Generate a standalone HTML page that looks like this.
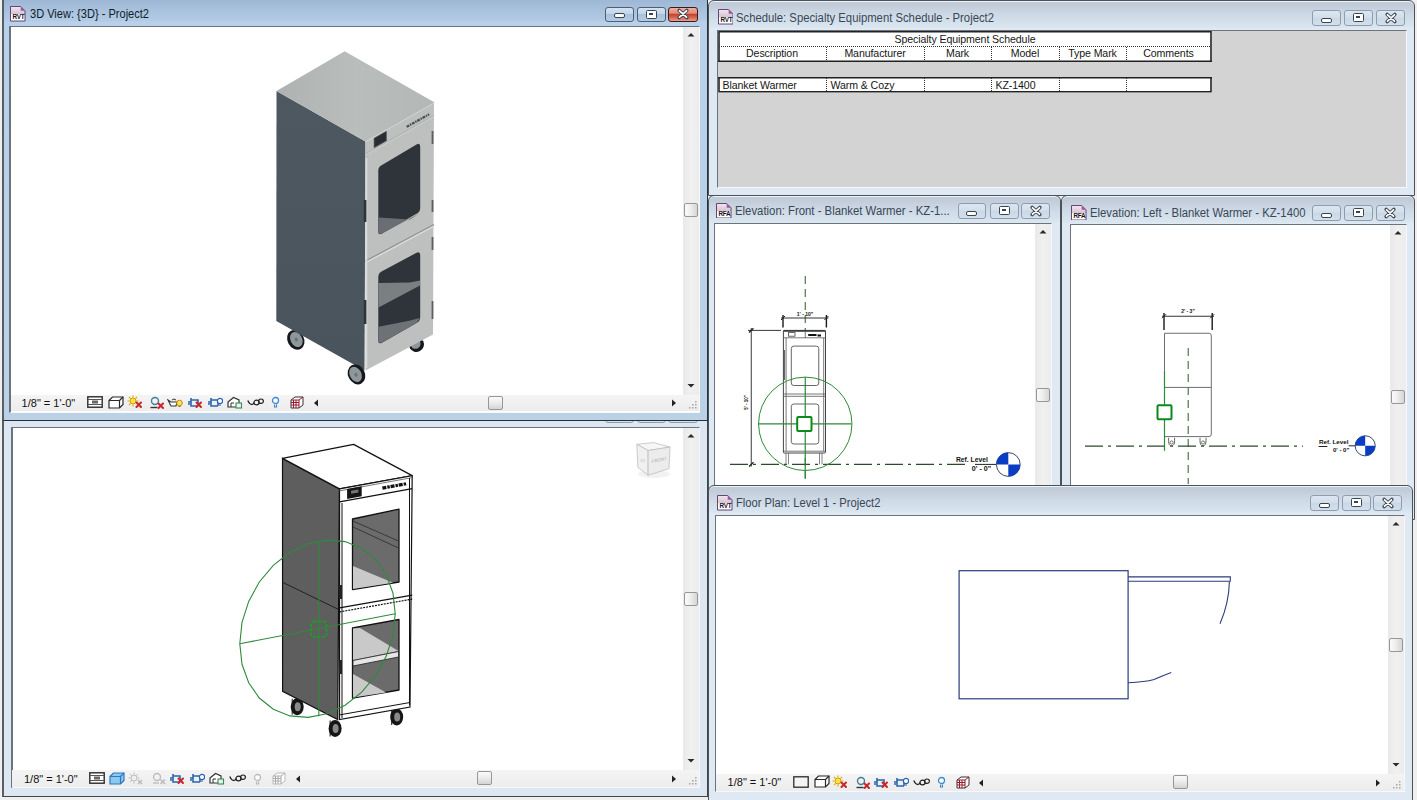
<!DOCTYPE html><html><head><meta charset="utf-8"><style>
*{box-sizing:border-box;margin:0;padding:0}
html,body{width:1417px;height:800px;overflow:hidden;background:#f1efed;font-family:"Liberation Sans",sans-serif;position:relative}
div,svg{position:absolute}
.win{border:1px solid #4a525a;border-radius:6px 6px 0 0;overflow:hidden;box-shadow:inset 0 1px 0 #eef3f8;background:linear-gradient(#c1cbd7 2px,#c3cdd9 5px,#cbd7e3 12px,#d3dfea 20px,#d9e5ef 26px,#e2eaf2 28px,#dfe9f4 29px)}
.act{border-color:#26303a;background:linear-gradient(#97b2d1,#a7c0dc 14px,#b3cbe5 26px,#b8d0e9 27px,#bbd1e6)}
.client{background:#fff;border:1px solid #6b747c;border-right-color:#f6f8fa;border-bottom-color:#f6f8fa;overflow:hidden}
.stat{background:#efefef;font-size:11px;color:#111;white-space:nowrap}
.tb{font-size:10.6px;letter-spacing:-0.1px;color:#161616;white-space:nowrap;line-height:11px}
</style></head><body>
<div class="win" style="left:2px;top:398px;width:706px;height:399px;border-color:#3c444c;border-left:2px solid #56606a;border-radius:0;background:#dce7f2"></div>
<div class="client" style="left:11px;top:427px;width:689px;height:361px;background:#fff;border-left:2px solid #6a747c"></div>
<div style="left:605px;top:415px;width:29px;height:8px;border:1px solid #8c9db1;border-radius:3px;background:#d6e1ec"></div>
<div style="left:637px;top:415px;width:29px;height:8px;border:1px solid #8c9db1;border-radius:3px;background:#d6e1ec"></div>
<div style="left:668px;top:415px;width:30px;height:8px;border:1px solid #8c9db1;border-radius:3px;background:#d6e1ec"></div>
<svg style="position:absolute;left:0;top:0" width="700" height="790" viewBox="0 0 700 790"><ellipse cx="297.2" cy="706.7" rx="6.5" ry="8.5" fill="#151515"/><ellipse cx="297.7" cy="706.7" rx="3" ry="4.5" fill="#8a8a8a"/><path d="M292.2 698.7v4M292.2 714.7v-4" stroke="#151515"/><ellipse cx="396.7" cy="717" rx="6.5" ry="8.5" fill="#151515"/><ellipse cx="397.2" cy="717" rx="3" ry="4.5" fill="#8a8a8a"/><path d="M391.7 709v4M391.7 725v-4" stroke="#151515"/><ellipse cx="335.1" cy="728.5" rx="6.5" ry="8.5" fill="#151515"/><ellipse cx="335.6" cy="728.5" rx="3" ry="4.5" fill="#8a8a8a"/><path d="M330.1 720.5v4M330.1 736.5v-4" stroke="#151515"/><polygon points="282.5,458.4 339.5,488.9 337.7,719.5 282.6,691.3" fill="#5e5e5e" stroke="#111" stroke-width="1.2"/><polyline points="282.6,582.3 338.0,609.2" fill="none" stroke="#222" stroke-width="1"/><polygon points="282.5,458.4 353.6,444.4 412.2,475.6 339.5,488.9" fill="#fff" stroke="#111" stroke-width="1.2" stroke-linejoin="round"/><polygon points="339.5,488.9 412.2,475.6 410.0,707.0 339.5,719.5" fill="#fff" stroke="#111" stroke-width="1.2"/><polyline points="339.5,501.9 412.2,488.6" fill="none" stroke="#111" stroke-width="1.2"/><polyline points="339.5,490.9 412.2,477.6" fill="none" stroke="#555" stroke-width="0.8"/><polygon points="347.1,489.0 361.7,486.3 361.7,496.3 347.1,499.0" fill="#151515"/><polygon points="351.1,490.8 358.4,489.4 358.4,492.4 351.1,493.8" fill="#777"/><polyline points="382.4,488.1 406.4,483.7" fill="none" stroke="#111" stroke-width="3.2" stroke-dasharray="4 1 2.5 0.8"/><polyline points="342.0,503.0 342.0,718.0" fill="none" stroke="#111" stroke-width="1"/><polyline points="409.5,478.0 409.5,705.0" fill="none" stroke="#111" stroke-width="1"/><rect x="339" y="585" width="3" height="14" fill="#222"/><rect x="339" y="660" width="3" height="14" fill="#222"/><polyline points="339.5,607.9 412.2,595.1" fill="none" stroke="#111" stroke-width="1.2"/><polyline points="339.5,611.9 412.2,599.1" fill="none" stroke="#111" stroke-width="1.2" stroke-dasharray="2 1"/><polyline points="339.5,714.9 410.0,702.5" fill="none" stroke="#111" stroke-width="1"/><polygon points="352.5,519.0 399.0,509.2 399.0,582.0 352.5,589.5" fill="#6b6b6b" stroke="#111" stroke-width="1.3" stroke-linejoin="round"/><polygon points="353.0,566.0 393.0,582.8 353.0,589.0" fill="#c9c9c9"/><polyline points="353.0,521.0 398.5,541.0" fill="none" stroke="#333" stroke-width="0.9"/><polyline points="353.0,527.0 398.5,548.0" fill="none" stroke="#333" stroke-width="0.9"/><polygon points="352.5,627.8 399.0,619.5 399.0,690.0 352.5,698.2" fill="#6b6b6b" stroke="#111" stroke-width="1.3" stroke-linejoin="round"/><polygon points="353.0,628.5 360.0,628.0 398.5,651.0 353.0,660.0" fill="#c9c9c9"/><polygon points="353.0,660.5 398.5,651.5 398.5,657.0 353.0,666.0" fill="#e6e6e6" stroke="#222" stroke-width="0.8"/><polygon points="353.0,674.0 386.0,692.5 353.0,697.5" fill="#c9c9c9"/><polygon points="395.2,613.8 393.0,593.2 386.3,574.8 375.7,559.5 361.7,548.2 345.1,541.6 326.9,540.1 308.1,543.7 289.9,552.3 273.3,565.3 259.3,582.0 248.7,601.4 242.0,622.4 239.8,643.8 242.0,664.3 248.7,682.7 259.3,698.0 273.3,709.3 289.9,715.9 308.1,717.4 326.9,713.8 345.1,705.2 361.7,692.2 375.7,675.5 386.3,656.1 393.0,635.1" fill="none" stroke="#2f8a3c" stroke-width="1.1"/><polyline points="239.8,643.8 395.2,613.8" fill="none" stroke="#2f8a3c" stroke-width="1.1"/><polyline points="318.8,541.2 318.8,716.2" fill="none" stroke="#2f8a3c" stroke-width="1.1"/><rect x="311" y="621.5" width="15.5" height="15.5" rx="3" fill="none" stroke="#1f9a2a" stroke-width="2" stroke-dasharray="3 1.5"/><ellipse cx="654" cy="474" rx="16" ry="4" fill="#f2f2f2"/><g stroke="#b8b8b8" stroke-width="0.7" stroke-linejoin="round"><path d="M636.8 444.3L653.7 442.6L670.1 447.1L648.1 450.5Z" fill="#f6f6f6"/><path d="M636.8 444.3L648.1 450.5L648.1 475.3L637.9 467.4Z" fill="#f0f0f0"/><path d="M648.1 450.5L670.1 447.1L669 468.6L648.1 475.3Z" fill="#ececec"/></g><text x="0" y="0" font-size="4.5" fill="#b0b0b0" font-family="Liberation Sans" transform="translate(652 463) rotate(-12)">FRONT</text><text x="0" y="0" font-size="4" fill="#b8b8b8" font-family="Liberation Sans" transform="translate(640 461) rotate(20)">LE</text></svg>
<div style="position:absolute;left:683px;top:428px;width:16px;height:342px;background:linear-gradient(90deg,#e9e9e9,#f0f0f0 50%,#ececec)"></div>
<svg style="position:absolute;left:683px;top:428px" width="16" height="17"><path d="M4.5 9.5L8 6L11.5 9.5Z" fill="#2a2a2a"/></svg>
<svg style="position:absolute;left:683px;top:753px" width="16" height="17"><path d="M4.5 6L8 9.5L11.5 6Z" fill="#2a2a2a"/></svg>
<div style="position:absolute;left:683.5px;top:592px;width:14px;height:14px;border:1px solid #979797;border-radius:2px;background:linear-gradient(90deg,#fafafa,#f0f0f0 40%,#d6d6d6)"></div>
<div style="left:12px;top:770px;width:687px;height:17px;background:linear-gradient(#f4f4f4,#ececec)"></div>
<div class="stat" style="left:24px;top:774.1999999999999px;line-height:11px;background:none">1/8" = 1'-0"</div>
<svg style="position:absolute;left:89px;top:772px" width="16" height="12" viewBox="0 0 16 12"><rect x="0.8" y="0.8" width="14.4" height="10.4" fill="#fff" stroke="#2a2a2a" stroke-width="1.4"/><path d="M1 3.5h14M1 8.5h14" stroke="#555" stroke-width="1"/><rect x="5" y="4.5" width="6" height="3" fill="#666"/></svg><svg style="position:absolute;left:109px;top:772px" width="16" height="13" viewBox="0 0 16 13"><path d="M1 4.5L4.5 1H15V8.5L11.5 12H1Z" fill="#8ec8ee" stroke="#2a78c0" stroke-width="1.2"/><path d="M1 4.5H11.5V12M11.5 4.5L15 1" fill="none" stroke="#2a78c0" stroke-width="1.2"/></svg><svg style="position:absolute;left:128px;top:772px" width="16" height="13" viewBox="0 0 16 13"><circle cx="6" cy="6" r="3" fill="#eee" stroke="#bbb"/><path d="M6 0.5v2M6 9.5v2M0.5 6h2M9.5 6h2M2 2l1.5 1.5M10 2l-1.5 1.5M2 10l1.5-1.5" stroke="#bbb"/><path d="M10 8l4 4m0-4l-4 4" stroke="#bbb" stroke-width="1.5"/></svg><svg style="position:absolute;left:151px;top:772px" width="16" height="13" viewBox="0 0 16 13"><circle cx="6" cy="5" r="3.5" fill="none" stroke="#bbb" stroke-width="1.3"/><path d="M2 11h6" stroke="#bbb" stroke-width="1.3"/><path d="M9.5 7.5l4.5 4.5m0-4.5l-4.5 4.5" stroke="#bbb" stroke-width="1.5"/></svg><svg style="position:absolute;left:169px;top:772px" width="16" height="13" viewBox="0 0 16 13"><path d="M1 6h3M4 2V10h7M4 4h7V10" fill="none" stroke="#2a66b0" stroke-width="1.6"/><path d="M1 8h2" stroke="#2a66b0" stroke-width="1.6"/><path d="M9.5 6.5l4.5 4.5m0 -4.5l-4.5 4.5" stroke="#c8262c" stroke-width="2" stroke-linecap="round"/></svg><svg style="position:absolute;left:189px;top:772px" width="16" height="13" viewBox="0 0 16 13"><path d="M1 6h3M4 2V10h7M4 4h7V10" fill="none" stroke="#2a66b0" stroke-width="1.6"/><path d="M1 8h2" stroke="#2a66b0" stroke-width="1.6"/><circle cx="13" cy="5" r="2.6" fill="#fff" stroke="#2a66b0" stroke-width="1.2"/><path d="M12 9h2" stroke="#2a66b0"/></svg><svg style="position:absolute;left:209px;top:772px" width="16" height="13" viewBox="0 0 16 13"><path d="M1 6L6.5 1.5L12 4V11H1Z" fill="#fff" stroke="#333" stroke-width="1.2"/><path d="M4 11V7h3" fill="none" stroke="#333"/><rect x="9" y="7" width="5.5" height="5" fill="#e8f4e8" stroke="#3a8a5a" stroke-width="1.1"/></svg><svg style="position:absolute;left:229px;top:772px" width="17" height="13" viewBox="0 0 17 13"><path d="M0.8 4.5Q2.5 8.5 5 8.5Q6.5 8 7.5 6.5" fill="none" stroke="#222" stroke-width="1.3"/><ellipse cx="9.5" cy="6.5" rx="2.6" ry="2.3" fill="none" stroke="#222" stroke-width="1.2"/><ellipse cx="14" cy="5.2" rx="2.4" ry="2.2" fill="none" stroke="#222" stroke-width="1.2"/></svg><svg style="position:absolute;left:253px;top:773px" width="9" height="13" viewBox="0 0 9 13"><circle cx="4.5" cy="4.5" r="3" fill="#fff" stroke="#bbb" stroke-width="1.3"/><path d="M3.5 8.5v2.5h2V8.5" fill="none" stroke="#bbb" stroke-width="1.1"/></svg><svg style="position:absolute;left:272px;top:772px" width="14" height="13" viewBox="0 0 14 13"><path d="M1 4L5 1H13V9L9 12H1Z" fill="#fff" stroke="#bbb" stroke-width="1"/><path d="M1 6.5h8M1 9h8M3.5 4V12M6 4V12M9 4V12M1 4h8l4-3" fill="none" stroke="#aaa" stroke-width="1"/></svg>
<svg style="position:absolute;left:295px;top:774.5px" width="6" height="8" viewBox="0 0 6 8"><path d="M5 0.5L1 4L5 7.5Z" fill="#222"/></svg>
<div style="left:477px;top:771px;width:15px;height:14px;border:1px solid #979797;border-radius:2px;background:linear-gradient(#fafafa,#ededed 45%,#d4d4d4)"></div>
<svg style="position:absolute;left:671px;top:774.5px" width="6" height="8" viewBox="0 0 6 8"><path d="M1 0.5L5 4L1 7.5Z" fill="#222"/></svg>
<svg style="position:absolute;left:688px;top:776px" width="10" height="10" viewBox="0 0 10 10"><g fill="#a8a8a8"><rect x="7" y="1" width="1.5" height="1.5"/><rect x="4" y="4" width="1.5" height="1.5"/><rect x="7" y="4" width="1.5" height="1.5"/><rect x="1" y="7" width="1.5" height="1.5"/><rect x="4" y="7" width="1.5" height="1.5"/><rect x="7" y="7" width="1.5" height="1.5"/></g></svg>
<div class="win act" style="left:2px;top:-6px;width:706px;height:427px;border-radius:0;border-left:2px solid #52606c"></div>
<div class="client" style="left:9px;top:26px;width:691px;height:387px;background:#fff;border-left:2px solid #6a747c"></div>
<svg style="position:absolute;left:0;top:0" width="700" height="412" viewBox="0 0 700 412"><defs><linearGradient id="topg" x1="0" y1="0" x2="1" y2="0"><stop offset="0" stop-color="#aeb2b1"/><stop offset="0.5" stop-color="#b9bdbc"/><stop offset="1" stop-color="#b3b7b6"/></linearGradient><linearGradient id="sideg" x1="0" y1="0" x2="0" y2="1"><stop offset="0" stop-color="#4e5860"/><stop offset="1" stop-color="#4a545c"/></linearGradient></defs><g transform="translate(295.8 339.8) rotate(-28)"><ellipse rx="8.2" ry="10.3" fill="#16191c"/><ellipse cx="0.6" rx="5.8" ry="8" fill="#8e979b"/><ellipse cx="0.6" rx="1.5" ry="2" fill="#6a7276"/></g><g transform="translate(416.6 344.8) rotate(-28)"><ellipse rx="7.5" ry="7" fill="#16191c"/><ellipse cx="-0.5" cy="-1" rx="5" ry="4.6" fill="#8e979b"/></g><polygon points="276.5,91.0 365.5,141.5 364.5,370.6 276.3,321.0" fill="url(#sideg)"/><polygon points="344.7,51.2 434.7,102.5 365.5,141.5 276.5,91.0" fill="url(#topg)"/><polygon points="365.5,141.5 434.0,102.5 433.0,334.6 365.5,370.5" fill="#bdc0be"/><polyline points="365.5,142.0 434.0,103.0" fill="none" stroke="#d0d3d1" stroke-width="1"/><polyline points="365.5,154.0 434.0,115.5" fill="none" stroke="#a2a6a5" stroke-width="0.8"/><polyline points="365.5,155.0 434.0,116.5" fill="none" stroke="#d2d5d3" stroke-width="0.8"/><polygon points="374.1,138.2 386.4,131.3 386.4,140.8 374.1,147.7" fill="#2a2e32" stroke="#4a4e52" stroke-width="0.6"/><polyline points="406.6,126.9 429.2,114.2" fill="none" stroke="#4a4f52" stroke-width="2.2" stroke-dasharray="3 0.8 1.5 0.8"/><polyline points="365.5,261.0 434.0,224.5" fill="none" stroke="#8c9090" stroke-width="1.2"/><polyline points="365.5,262.7 434.0,226.2" fill="none" stroke="#d8dad8" stroke-width="1.4"/><path d="M378.3 170.6Q378.3 166.6 382 165L416.5 144.4Q420.2 142.6 420.2 146.6V208Q420.2 212 416.5 213.8L382 233.6Q378.3 235.4 378.3 231.4Z" fill="#2e343a"/><polygon points="378.5,217.5 410.0,219.5 420.0,213.0 382.0,233.5 378.5,234.0" fill="#6a6e72"/><path d="M378.3 277Q378.3 273 382 271.2L416.5 252.8Q420.2 251 420.2 255V317.2Q420.2 321.2 416.5 323L382 342.7Q378.3 344.5 378.3 340.5Z" fill="#2e343a"/><polygon points="378.5,283.0 410.0,282.6 420.0,280.6 420.0,285.4 378.5,307.4" fill="#7a7f82"/><polygon points="378.5,326.7 408.0,321.0 420.0,318.0 416.5,323.0 382.0,342.5 378.5,343.0" fill="#6e7276"/><polyline points="366.5,158.0 366.5,368.0" fill="none" stroke="#d8dad9" stroke-width="1.6"/><rect x="363.8" y="200" width="2.6" height="22" fill="#30353a"/><rect x="363.8" y="300" width="2.6" height="24" fill="#30353a"/><rect x="431.6" y="131" width="1.8" height="13" fill="#5a6064"/><rect x="431.6" y="200" width="1.8" height="12" fill="#5a6064"/><rect x="431.6" y="237" width="1.8" height="13" fill="#5a6064"/><rect x="431.6" y="301" width="1.8" height="18" fill="#5a6064"/><g transform="translate(356.5 374.4) rotate(-28)"><ellipse rx="8.4" ry="10.4" fill="#16191c"/><ellipse cx="-0.8" cy="-0.5" rx="5.8" ry="8" fill="#8e979b"/><ellipse cx="-0.6" rx="1.5" ry="2" fill="#6a7276"/></g></svg>
<div style="position:absolute;left:683px;top:27px;width:16px;height:368px;background:linear-gradient(90deg,#e9e9e9,#f0f0f0 50%,#ececec)"></div>
<svg style="position:absolute;left:683px;top:27px" width="16" height="17"><path d="M4.5 9.5L8 6L11.5 9.5Z" fill="#2a2a2a"/></svg>
<svg style="position:absolute;left:683px;top:378px" width="16" height="17"><path d="M4.5 6L8 9.5L11.5 6Z" fill="#2a2a2a"/></svg>
<div style="position:absolute;left:683.5px;top:203px;width:14px;height:14px;border:1px solid #979797;border-radius:2px;background:linear-gradient(90deg,#fafafa,#f0f0f0 40%,#d6d6d6)"></div>
<div style="left:11px;top:395px;width:688px;height:16px;background:linear-gradient(#f4f4f4,#ececec)"></div>
<div class="stat" style="left:21.6px;top:398.4px;line-height:11px;background:none">1/8" = 1'-0"</div>
<svg style="position:absolute;left:87px;top:396px" width="16" height="12" viewBox="0 0 16 12"><rect x="0.8" y="0.8" width="14.4" height="10.4" fill="#fff" stroke="#2a2a2a" stroke-width="1.4"/><path d="M1 3.5h14M1 8.5h14" stroke="#555" stroke-width="1"/><rect x="5" y="4.5" width="6" height="3" fill="#666"/></svg><svg style="position:absolute;left:108px;top:396px" width="16" height="13" viewBox="0 0 16 13"><path d="M1 4.5L4.5 1H15V8.5L11.5 12H1Z" fill="#fff" stroke="#2a2a2a" stroke-width="1.2"/><path d="M1 4.5H11.5V12M11.5 4.5L15 1" fill="none" stroke="#2a2a2a" stroke-width="1.2"/></svg><svg style="position:absolute;left:127px;top:395px" width="16" height="13" viewBox="0 0 16 13"><circle cx="6" cy="6" r="3" fill="#ffe14a" stroke="#d4a000"/><path d="M6 0.5v2M6 9.5v2M0.5 6h2M9.5 6h2M2 2l1.5 1.5M10 2l-1.5 1.5M2 10l1.5-1.5" stroke="#e0b000" stroke-width="1.2"/><path d="M9.5 7.5l4.5 4.5m0 -4.5l-4.5 4.5" stroke="#c8262c" stroke-width="2" stroke-linecap="round"/></svg><svg style="position:absolute;left:149px;top:396px" width="16" height="13" viewBox="0 0 16 13"><circle cx="6" cy="5" r="3.5" fill="none" stroke="#3f7f9a" stroke-width="1.4"/><path d="M1.5 11.5h7" stroke="#333" stroke-width="1.4"/><path d="M9.5 7.5l4.5 4.5m0 -4.5l-4.5 4.5" stroke="#c8262c" stroke-width="2" stroke-linecap="round"/></svg><svg style="position:absolute;left:167px;top:396px" width="16" height="13" viewBox="0 0 16 13"><path d="M1 4l3 2h6l-1 4H4Z" fill="#fff" stroke="#333" stroke-width="1.1"/><path d="M5 4q2-2 4 0" fill="none" stroke="#333"/><circle cx="12.5" cy="7" r="2.8" fill="#ffe060" stroke="#c09000"/><path d="M11.5 10.5h2" stroke="#666"/></svg><svg style="position:absolute;left:187px;top:396px" width="16" height="13" viewBox="0 0 16 13"><path d="M1 6h3M4 2V10h7M4 4h7V10" fill="none" stroke="#2a66b0" stroke-width="1.6"/><path d="M1 8h2" stroke="#2a66b0" stroke-width="1.6"/><path d="M9.5 6.5l4.5 4.5m0 -4.5l-4.5 4.5" stroke="#c8262c" stroke-width="2" stroke-linecap="round"/></svg><svg style="position:absolute;left:207px;top:396px" width="16" height="13" viewBox="0 0 16 13"><path d="M1 6h3M4 2V10h7M4 4h7V10" fill="none" stroke="#2a66b0" stroke-width="1.6"/><path d="M1 8h2" stroke="#2a66b0" stroke-width="1.6"/><circle cx="13" cy="5" r="2.6" fill="#fff" stroke="#2a66b0" stroke-width="1.2"/><path d="M12 9h2" stroke="#2a66b0"/></svg><svg style="position:absolute;left:227px;top:396px" width="16" height="13" viewBox="0 0 16 13"><path d="M1 6L6.5 1.5L12 4V11H1Z" fill="#fff" stroke="#333" stroke-width="1.2"/><path d="M4 11V7h3" fill="none" stroke="#333"/><rect x="9" y="7" width="5.5" height="5" fill="#e8f4e8" stroke="#3a8a5a" stroke-width="1.1"/></svg><svg style="position:absolute;left:247px;top:396px" width="17" height="13" viewBox="0 0 17 13"><path d="M0.8 4.5Q2.5 8.5 5 8.5Q6.5 8 7.5 6.5" fill="none" stroke="#222" stroke-width="1.3"/><ellipse cx="9.5" cy="6.5" rx="2.6" ry="2.3" fill="none" stroke="#222" stroke-width="1.2"/><ellipse cx="14" cy="5.2" rx="2.4" ry="2.2" fill="none" stroke="#222" stroke-width="1.2"/></svg><svg style="position:absolute;left:271px;top:396px" width="9" height="13" viewBox="0 0 9 13"><circle cx="4.5" cy="4.5" r="3" fill="#fff" stroke="#3a88d0" stroke-width="1.3"/><path d="M3.5 8.5v2.5h2V8.5" fill="none" stroke="#3a88d0" stroke-width="1.1"/></svg><svg style="position:absolute;left:290px;top:396px" width="14" height="13" viewBox="0 0 14 13"><path d="M1 4L5 1H13V9L9 12H1Z" fill="#fff" stroke="#333" stroke-width="1"/><path d="M1 6.5h8M1 9h8M3.5 4V12M6 4V12M9 4V12M1 4h8l4-3" fill="none" stroke="#9a1a2a" stroke-width="1"/></svg>
<svg style="position:absolute;left:313px;top:399.0px" width="6" height="8" viewBox="0 0 6 8"><path d="M5 0.5L1 4L5 7.5Z" fill="#222"/></svg>
<div style="left:488px;top:396px;width:15px;height:14px;border:1px solid #979797;border-radius:2px;background:linear-gradient(#fafafa,#ededed 45%,#d4d4d4)"></div>
<svg style="position:absolute;left:671px;top:399.0px" width="6" height="8" viewBox="0 0 6 8"><path d="M1 0.5L5 4L1 7.5Z" fill="#222"/></svg>
<svg style="position:absolute;left:688px;top:400px" width="10" height="10" viewBox="0 0 10 10"><g fill="#a8a8a8"><rect x="7" y="1" width="1.5" height="1.5"/><rect x="4" y="4" width="1.5" height="1.5"/><rect x="7" y="4" width="1.5" height="1.5"/><rect x="1" y="7" width="1.5" height="1.5"/><rect x="4" y="7" width="1.5" height="1.5"/><rect x="7" y="7" width="1.5" height="1.5"/></g></svg>
<svg style="position:absolute;left:10px;top:6px" width="15.5" height="15.5" viewBox="0 0 16 16">
<defs><linearGradient id="ig106" x1="0" y1="0" x2="0" y2="1"><stop offset="0" stop-color="#f4e4f0"/><stop offset="0.5" stop-color="#d8c4d4"/><stop offset="0.52" stop-color="#ffffff"/><stop offset="1" stop-color="#ffffff"/></linearGradient></defs>
<path d="M0.5 0.5H11L15.5 5V15.5H0.5Z" fill="url(#ig106)" stroke="#5d3f70"/>
<path d="M11 0.5L15.5 5H11Z" fill="#9a5a9a"/>
<text x="2.6" y="13.6" font-family="Liberation Sans" font-weight="bold" font-size="6.6" fill="#161616" letter-spacing="-0.3">RVT</text>
</svg>
<div style="position:absolute;left:29.6px;top:8.2px;font-size:12px;line-height:12px;letter-spacing:0px;color:#101c2a;white-space:nowrap;transform:scaleX(0.921);transform-origin:0 0">3D View: {3D} - Project2</div>
<div style="position:absolute;left:605px;top:6.5px;width:29px;height:15px;border:1px solid #4f5f72;border-radius:3px;background:linear-gradient(#d4e3f2,#c0d4ea 45%,#a9c1dc 50%,#b4cbe4)"></div>
<div style="position:absolute;left:614.0px;top:13.0px;width:11px;height:5px;border:1.5px solid #3a4450;border-radius:2px;background:#fff"></div>
<div style="position:absolute;left:637px;top:6.5px;width:29px;height:15px;border:1px solid #4f5f72;border-radius:3px;background:linear-gradient(#d4e3f2,#c0d4ea 45%,#a9c1dc 50%,#b4cbe4)"></div>
<div style="position:absolute;left:646.0px;top:9.5px;width:11px;height:9px;border:1.5px solid #3a4450;border-radius:1.5px;background:#fff"><div style="position:absolute;left:2px;top:2px;width:4px;height:2px;background:#3a4450"></div></div>
<div style="position:absolute;left:668px;top:6.5px;width:30px;height:15px;border:1px solid #3e1a16;border-radius:3px;background:linear-gradient(#f0b0a0,#e08a78 40%,#c8442c 50%,#d66a52 75%,#e8a090)"></div>
<svg style="position:absolute;left:676.0px;top:7.0px" width="14" height="14" viewBox="0 0 14 14"><path d="M3.2 3.5L10.8 10.5M10.8 3.5L3.2 10.5" stroke="#3a4450" stroke-width="3.6" stroke-linecap="round"/><path d="M3.5 3.8L10.5 10.2M10.5 3.8L3.5 10.2" stroke="#fff" stroke-width="1.8" stroke-linecap="round"/></svg>
<div class="win" style="left:708px;top:0px;width:707px;height:196px;"></div>
<div class="client" style="left:717px;top:30px;width:690px;height:158px;background:#d3d3d3;"></div>
<div style="left:718px;top:31px;width:494px;height:31px;background:#fff"></div>
<div style="left:718px;top:77px;width:494px;height:16px;background:#fff"></div>
<svg style="position:absolute;left:710px;top:25px;" width="510" height="75" viewBox="710 25 510 75"><path d="M719 61.5V31.75H1211V61.5M718 61.25H1212" fill="none" stroke="#222" stroke-width="1.6"/><path d="M719 46.5H1211" stroke="#333" stroke-width="1" stroke-dasharray="1 1"/><path d="M826.5 47V61" stroke="#333" stroke-width="1" stroke-dasharray="1 1"/><path d="M826.5 78V92" stroke="#333" stroke-width="1" stroke-dasharray="1 1"/><path d="M924.5 47V61" stroke="#333" stroke-width="1" stroke-dasharray="1 1"/><path d="M924.5 78V92" stroke="#333" stroke-width="1" stroke-dasharray="1 1"/><path d="M991.5 47V61" stroke="#333" stroke-width="1" stroke-dasharray="1 1"/><path d="M991.5 78V92" stroke="#333" stroke-width="1" stroke-dasharray="1 1"/><path d="M1059.5 47V61" stroke="#333" stroke-width="1" stroke-dasharray="1 1"/><path d="M1059.5 78V92" stroke="#333" stroke-width="1" stroke-dasharray="1 1"/><path d="M1126.5 47V61" stroke="#333" stroke-width="1" stroke-dasharray="1 1"/><path d="M1126.5 78V92" stroke="#333" stroke-width="1" stroke-dasharray="1 1"/><path d="M719 77.5V91.75H1211V77.5M718 77.75H1212" fill="none" stroke="#222" stroke-width="1.6"/></svg>
<div class="tb" style="left:718px;top:33.5px;width:494px;text-align:center">Specialty Equipment Schedule</div>
<div class="tb" style="left:718px;top:47.9px;width:108px;text-align:center">Description</div>
<div class="tb" style="left:826px;top:47.9px;width:98px;text-align:center">Manufacturer</div>
<div class="tb" style="left:924px;top:47.9px;width:67px;text-align:center">Mark</div>
<div class="tb" style="left:991px;top:47.9px;width:68px;text-align:center">Model</div>
<div class="tb" style="left:1059px;top:47.9px;width:67px;text-align:center">Type Mark</div>
<div class="tb" style="left:1126px;top:47.9px;width:85px;text-align:center">Comments</div>
<div class="tb" style="left:722.5px;top:80px">Blanket Warmer</div>
<div class="tb" style="left:830.5px;top:80px">Warm &amp; Cozy</div>
<div class="tb" style="left:995.5px;top:80px">KZ-1400</div>
<svg style="position:absolute;left:717.8px;top:9.2px" width="15.5" height="15.5" viewBox="0 0 16 16">
<defs><linearGradient id="ig717.89.2" x1="0" y1="0" x2="0" y2="1"><stop offset="0" stop-color="#f4e4f0"/><stop offset="0.5" stop-color="#d8c4d4"/><stop offset="0.52" stop-color="#ffffff"/><stop offset="1" stop-color="#ffffff"/></linearGradient></defs>
<path d="M0.5 0.5H11L15.5 5V15.5H0.5Z" fill="url(#ig717.89.2)" stroke="#5d3f70"/>
<path d="M11 0.5L15.5 5H11Z" fill="#9a5a9a"/>
<text x="2.6" y="13.6" font-family="Liberation Sans" font-weight="bold" font-size="6.6" fill="#161616" letter-spacing="-0.3">RVT</text>
</svg>
<div style="position:absolute;left:736.4px;top:12.1px;font-size:12px;line-height:12px;letter-spacing:0px;color:#3a4756;white-space:nowrap;transform:scaleX(0.941);transform-origin:0 0">Schedule: Specialty Equipment Schedule - Project2</div>
<div style="position:absolute;left:1312px;top:10px;width:29px;height:16px;border:1px solid #8c9db1;border-radius:3px;background:linear-gradient(#dce6f0,#d3dfeb 45%,#cad8e6 50%,#d3dfeb)"></div>
<div style="position:absolute;left:1321.0px;top:18.0px;width:11px;height:5px;border:1.5px solid #3a4450;border-radius:2px;background:#fff"></div>
<div style="position:absolute;left:1344px;top:10px;width:29px;height:16px;border:1px solid #8c9db1;border-radius:3px;background:linear-gradient(#dce6f0,#d3dfeb 45%,#cad8e6 50%,#d3dfeb)"></div>
<div style="position:absolute;left:1353.0px;top:13px;width:11px;height:9px;border:1.5px solid #3a4450;border-radius:1.5px;background:#fff"><div style="position:absolute;left:2px;top:2px;width:4px;height:2px;background:#3a4450"></div></div>
<div style="position:absolute;left:1376px;top:10px;width:29px;height:16px;border:1px solid #8c9db1;border-radius:3px;background:linear-gradient(#dce6f0,#d3dfeb 45%,#cad8e6 50%,#d3dfeb)"></div>
<svg style="position:absolute;left:1383.5px;top:11.0px" width="14" height="14" viewBox="0 0 14 14"><path d="M3.2 3.5L10.8 10.5M10.8 3.5L3.2 10.5" stroke="#3a4450" stroke-width="3.6" stroke-linecap="round"/><path d="M3.5 3.8L10.5 10.2M10.5 3.8L3.5 10.2" stroke="#fff" stroke-width="1.8" stroke-linecap="round"/></svg>
<div class="win" style="left:708px;top:195px;width:353px;height:325px;"></div>
<div class="client" style="left:714px;top:223px;width:338px;height:297px;background:#fff;"></div>
<svg style="position:absolute;left:715px;top:224px" width="320" height="260" viewBox="715 224 320 260"><path d="M805.25 276V484" stroke="#3d6b40" stroke-width="1.1" stroke-dasharray="8 5"/><path d="M730 464.4H968" stroke="#2c4a2c" stroke-width="1.1" stroke-dasharray="18 5 3 5"/><path d="M975 464.4H997" stroke="#222" stroke-width="1"/><path d="M781 318H828.5" stroke="#333" stroke-width="1.1"/><path d="M783 315V327.6M826.4 315V327.6" stroke="#1a1a1a" stroke-width="1.4"/><path d="M781 320L785 316M824.4 320L828.4 316" stroke="#222" stroke-width="1"/><text x="805" y="315.5" font-family="Liberation Sans" font-weight="bold" font-size="5" fill="#111" text-anchor="middle" >1' - 10"</text><path d="M751.25 328V466.5M748 330.4H781" stroke="#222" stroke-width="0.9"/><path d="M749 332.5L753.5 328.3M749 466.5L753.5 462.3" stroke="#222" stroke-width="1.3"/><text x="0" y="0" font-family="Liberation Sans" font-weight="bold" font-size="4.5" fill="#111" text-anchor="middle" transform="translate(747.5 402.4) rotate(-90)">5' - 10"</text><rect x="783.4" y="330.4" width="42.1" height="122.6" fill="#fff" stroke="#444" stroke-width="1" rx="0.8"/><path d="M783.4 331H825.5" stroke="#333" stroke-width="1.6"/><path d="M783.4 337.8H825.5M786.1 338V451M823.7 338V451M783.4 394H825.5M783.4 396.3H825.5M783.4 451.2H825.5" stroke="#555" stroke-width="0.8" fill="none"/><path d="M786 453V464.3M822 453V464.3M788.5 453V464.3M819.5 453V464.3" stroke="#666" stroke-width="0.8"/><rect x="788.4" y="332.6" width="6.6" height="3.6" fill="#fff" stroke="#444" stroke-width="0.8"/><path d="M808.2 335H816.5M817.5 335.4H821" stroke="#111" stroke-width="2"/><path d="M805.25 331V338" stroke="#555" stroke-width="0.8"/><rect x="791.3" y="346.1" width="27.45" height="39.4" rx="2.5" fill="none" stroke="#555" stroke-width="0.9"/><rect x="791.3" y="404" width="27.45" height="40" rx="2.5" fill="none" stroke="#555" stroke-width="0.9"/><path d="M784.5 350V380" stroke="#666" stroke-width="1.2"/><circle cx="805.25" cy="423.8" r="46.7" fill="none" stroke="#2e8a36" stroke-width="1"/><path d="M758 423.8H851.5M805.25 377V478" stroke="#2e8a36" stroke-width="1.2"/><rect x="797.2" y="417.1" width="14.3" height="14" rx="1" fill="#fff" stroke="#0a8a1a" stroke-width="2"/><rect x="799.5" y="419.2" width="9.8" height="9.8" rx="4.5" fill="#fff"/><circle cx="1008.3" cy="464.5" r="11.9" fill="#fff" stroke="#3a4a6a" stroke-width="1"/><path d="M1008.3 464.5V452.6A11.9 11.9 0 0 0 996.4 464.5Z" fill="#0a3cc4"/><path d="M1008.3 464.5V476.4A11.9 11.9 0 0 0 1020.1999999999999 464.5Z" fill="#0a3cc4"/><text x="955.9" y="462.3" font-family="Liberation Sans" font-weight="bold" font-size="6.3" fill="#111" text-anchor="start" textLength="32" lengthAdjust="spacingAndGlyphs">Ref. Level</text><text x="971.8" y="470.8" font-family="Liberation Sans" font-weight="bold" font-size="6.3" fill="#111" text-anchor="start" textLength="19.3" lengthAdjust="spacingAndGlyphs">0' - 0"</text></svg>
<div style="position:absolute;left:1035px;top:224px;width:16px;height:296px;background:linear-gradient(90deg,#e9e9e9,#f0f0f0 50%,#ececec)"></div>
<svg style="position:absolute;left:1035px;top:224px" width="16" height="17"><path d="M4.5 9.5L8 6L11.5 9.5Z" fill="#2a2a2a"/></svg>
<svg style="position:absolute;left:1035px;top:503px" width="16" height="17"><path d="M4.5 6L8 9.5L11.5 6Z" fill="#2a2a2a"/></svg>
<div style="position:absolute;left:1035.5px;top:388px;width:14px;height:14px;border:1px solid #979797;border-radius:2px;background:linear-gradient(90deg,#fafafa,#f0f0f0 40%,#d6d6d6)"></div>
<svg style="position:absolute;left:716px;top:202.5px" width="15.5" height="15.5" viewBox="0 0 16 16">
<defs><linearGradient id="ig716202.5" x1="0" y1="0" x2="0" y2="1"><stop offset="0" stop-color="#f4e4f0"/><stop offset="0.5" stop-color="#d8c4d4"/><stop offset="0.52" stop-color="#ffffff"/><stop offset="1" stop-color="#ffffff"/></linearGradient></defs>
<path d="M0.5 0.5H11L15.5 5V15.5H0.5Z" fill="url(#ig716202.5)" stroke="#5d3f70"/>
<path d="M11 0.5L15.5 5H11Z" fill="#9a5a9a"/>
<text x="2.6" y="13.6" font-family="Liberation Sans" font-weight="bold" font-size="6.6" fill="#161616" letter-spacing="-0.3">RFA</text>
</svg>
<div style="position:absolute;left:734.8px;top:205.1px;font-size:12px;line-height:12px;letter-spacing:0px;color:#3a4756;white-space:nowrap;transform:scaleX(0.946);transform-origin:0 0">Elevation: Front - Blanket Warmer - KZ-1...</div>
<div style="position:absolute;left:957.6px;top:203px;width:28px;height:16px;border:1px solid #8c9db1;border-radius:3px;background:linear-gradient(#dce6f0,#d3dfeb 45%,#cad8e6 50%,#d3dfeb)"></div>
<div style="position:absolute;left:966.1px;top:211.0px;width:11px;height:5px;border:1.5px solid #3a4450;border-radius:2px;background:#fff"></div>
<div style="position:absolute;left:989.5px;top:203px;width:29px;height:16px;border:1px solid #8c9db1;border-radius:3px;background:linear-gradient(#dce6f0,#d3dfeb 45%,#cad8e6 50%,#d3dfeb)"></div>
<div style="position:absolute;left:998.5px;top:206px;width:11px;height:9px;border:1.5px solid #3a4450;border-radius:1.5px;background:#fff"><div style="position:absolute;left:2px;top:2px;width:4px;height:2px;background:#3a4450"></div></div>
<div style="position:absolute;left:1021.3px;top:203px;width:29px;height:16px;border:1px solid #8c9db1;border-radius:3px;background:linear-gradient(#dce6f0,#d3dfeb 45%,#cad8e6 50%,#d3dfeb)"></div>
<svg style="position:absolute;left:1028.8px;top:204.0px" width="14" height="14" viewBox="0 0 14 14"><path d="M3.2 3.5L10.8 10.5M10.8 3.5L3.2 10.5" stroke="#3a4450" stroke-width="3.6" stroke-linecap="round"/><path d="M3.5 3.8L10.5 10.2M10.5 3.8L3.5 10.2" stroke="#fff" stroke-width="1.8" stroke-linecap="round"/></svg>
<div class="win" style="left:1061px;top:195px;width:354px;height:325px;"></div>
<div class="client" style="left:1069.5px;top:224px;width:337.5px;height:296px;background:#fff;"></div>
<svg style="position:absolute;left:1070px;top:225px" width="320" height="259" viewBox="1070 225 320 259"><path d="M1188.2 344V484" stroke="#3d6b40" stroke-width="1.1" stroke-dasharray="8 5" stroke-dashoffset="-4"/><path d="M1085 446.1H1303" stroke="#2c4a2c" stroke-width="1.1" stroke-dasharray="18 5 3 5"/><path d="M1318.6 446.5H1327.4M1348.6 445.8H1356" stroke="#222" stroke-width="1"/><path d="M1162 316.2H1214" stroke="#333" stroke-width="1.1"/><path d="M1164 313V330M1212.2 313V330" stroke="#1a1a1a" stroke-width="1.4"/><path d="M1162 318.2L1166 314.2M1210.2 318.2L1214.2 314.2" stroke="#222" stroke-width="1"/><text x="1188" y="312.8" font-family="Liberation Sans" font-weight="bold" font-size="5" fill="#111" text-anchor="middle" >2' - 3"</text><path d="M1164.5 436.6V333.25H1209.3Q1211.3 333.25 1211.3 336V434Q1211.3 436.6 1209 436.6H1164.5M1164.5 387.4H1211.3" fill="none" stroke="#6e6e6e" stroke-width="1"/><path d="M1168.6 437.8v3q0 5 3 5q3 0 3-5v-3" fill="none" stroke="#555" stroke-width="0.9"/><circle cx="1171.6" cy="442.5" r="1.6" fill="none" stroke="#555" stroke-width="0.8"/><path d="M1200 437.8v3q0 5 3 5q3 0 3-5v-3" fill="none" stroke="#555" stroke-width="0.9"/><circle cx="1203" cy="442.5" r="1.6" fill="none" stroke="#555" stroke-width="0.8"/><path d="M1164.5 371.3V450.8" stroke="#2e8a36" stroke-width="1.2"/><rect x="1157.5" y="405.3" width="14" height="14" rx="1" fill="#fff" stroke="#0a8a1a" stroke-width="2"/><rect x="1159.6" y="407.4" width="9.8" height="9.8" rx="4.5" fill="#fff"/><circle cx="1365.2" cy="445.8" r="10.06" fill="#fff" stroke="#3a4a6a" stroke-width="1"/><path d="M1365.2 445.8V435.74A10.06 10.06 0 0 0 1355.14 445.8Z" fill="#0a3cc4"/><path d="M1365.2 445.8V455.86A10.06 10.06 0 0 0 1375.26 445.8Z" fill="#0a3cc4"/><text x="1318.9" y="443.7" font-family="Liberation Sans" font-weight="bold" font-size="5.6" fill="#111" text-anchor="start" textLength="29.7" lengthAdjust="spacingAndGlyphs">Ref. Level</text><text x="1333" y="451.5" font-family="Liberation Sans" font-weight="bold" font-size="5.6" fill="#111" text-anchor="start" textLength="16.3" lengthAdjust="spacingAndGlyphs">0' - 0"</text></svg>
<div style="position:absolute;left:1390px;top:225px;width:16px;height:295px;background:linear-gradient(90deg,#e9e9e9,#f0f0f0 50%,#ececec)"></div>
<svg style="position:absolute;left:1390px;top:225px" width="16" height="17"><path d="M4.5 9.5L8 6L11.5 9.5Z" fill="#2a2a2a"/></svg>
<svg style="position:absolute;left:1390px;top:503px" width="16" height="17"><path d="M4.5 6L8 9.5L11.5 6Z" fill="#2a2a2a"/></svg>
<div style="position:absolute;left:1390.5px;top:390px;width:14px;height:14px;border:1px solid #979797;border-radius:2px;background:linear-gradient(90deg,#fafafa,#f0f0f0 40%,#d6d6d6)"></div>
<svg style="position:absolute;left:1071px;top:204.6px" width="15.5" height="15.5" viewBox="0 0 16 16">
<defs><linearGradient id="ig1071204.6" x1="0" y1="0" x2="0" y2="1"><stop offset="0" stop-color="#f4e4f0"/><stop offset="0.5" stop-color="#d8c4d4"/><stop offset="0.52" stop-color="#ffffff"/><stop offset="1" stop-color="#ffffff"/></linearGradient></defs>
<path d="M0.5 0.5H11L15.5 5V15.5H0.5Z" fill="url(#ig1071204.6)" stroke="#5d3f70"/>
<path d="M11 0.5L15.5 5H11Z" fill="#9a5a9a"/>
<text x="2.6" y="13.6" font-family="Liberation Sans" font-weight="bold" font-size="6.6" fill="#161616" letter-spacing="-0.3">RFA</text>
</svg>
<div style="position:absolute;left:1089.6px;top:206.6px;font-size:12px;line-height:12px;letter-spacing:0px;color:#3a4756;white-space:nowrap;transform:scaleX(0.941);transform-origin:0 0">Elevation: Left - Blanket Warmer - KZ-1400</div>
<div style="position:absolute;left:1312.4px;top:204.6px;width:29px;height:16px;border:1px solid #8c9db1;border-radius:3px;background:linear-gradient(#dce6f0,#d3dfeb 45%,#cad8e6 50%,#d3dfeb)"></div>
<div style="position:absolute;left:1321.4px;top:212.6px;width:11px;height:5px;border:1.5px solid #3a4450;border-radius:2px;background:#fff"></div>
<div style="position:absolute;left:1344px;top:204.6px;width:29px;height:16px;border:1px solid #8c9db1;border-radius:3px;background:linear-gradient(#dce6f0,#d3dfeb 45%,#cad8e6 50%,#d3dfeb)"></div>
<div style="position:absolute;left:1353.0px;top:207.6px;width:11px;height:9px;border:1.5px solid #3a4450;border-radius:1.5px;background:#fff"><div style="position:absolute;left:2px;top:2px;width:4px;height:2px;background:#3a4450"></div></div>
<div style="position:absolute;left:1375.6px;top:204.6px;width:29px;height:16px;border:1px solid #8c9db1;border-radius:3px;background:linear-gradient(#dce6f0,#d3dfeb 45%,#cad8e6 50%,#d3dfeb)"></div>
<svg style="position:absolute;left:1383.1px;top:205.6px" width="14" height="14" viewBox="0 0 14 14"><path d="M3.2 3.5L10.8 10.5M10.8 3.5L3.2 10.5" stroke="#3a4450" stroke-width="3.6" stroke-linecap="round"/><path d="M3.5 3.8L10.5 10.2M10.5 3.8L3.5 10.2" stroke="#fff" stroke-width="1.8" stroke-linecap="round"/></svg>
<div class="win" style="left:708px;top:485px;width:705px;height:345px;"></div>
<div class="client" style="left:715px;top:515px;width:690px;height:277px;background:#fff;"></div>
<svg style="position:absolute;left:716px;top:516px" width="672" height="258" viewBox="716 516 672 258"><rect x="959.1" y="570.7" width="169" height="128.1" fill="none" stroke="#2b3c7c" stroke-width="1.2"/><path d="M1128.1 576.9H1230.3V581.2H1128.1" fill="none" stroke="#2b3c7c" stroke-width="1.1"/><path d="M1229.4 581.5Q1229 603 1220 623.75" fill="none" stroke="#2b3c7c" stroke-width="1.1"/><path d="M1128.1 682.8Q1145 682 1154 679.5Q1162 676 1171.25 672.5" fill="none" stroke="#2b3c7c" stroke-width="1.1"/></svg>
<div style="position:absolute;left:1388px;top:516px;width:16px;height:258px;background:linear-gradient(90deg,#e9e9e9,#f0f0f0 50%,#ececec)"></div>
<svg style="position:absolute;left:1388px;top:516px" width="16" height="17"><path d="M4.5 9.5L8 6L11.5 9.5Z" fill="#2a2a2a"/></svg>
<svg style="position:absolute;left:1388px;top:757px" width="16" height="17"><path d="M4.5 6L8 9.5L11.5 6Z" fill="#2a2a2a"/></svg>
<div style="position:absolute;left:1388.5px;top:638px;width:14px;height:14px;border:1px solid #979797;border-radius:2px;background:linear-gradient(90deg,#fafafa,#f0f0f0 40%,#d6d6d6)"></div>
<div style="left:716px;top:774px;width:688px;height:17px;background:linear-gradient(#f4f4f4,#ececec)"></div>
<div class="stat" style="left:727.6px;top:777.4px;line-height:11px;background:none">1/8" = 1'-0"</div>
<svg style="position:absolute;left:793px;top:776px" width="16" height="12" viewBox="0 0 16 12"><rect x="0.8" y="0.8" width="14.4" height="10.4" fill="#f4f4f4" stroke="#2a2a2a" stroke-width="1.3"/></svg><svg style="position:absolute;left:814px;top:775px" width="16" height="13" viewBox="0 0 16 13"><path d="M1 4.5L4.5 1H15V8.5L11.5 12H1Z" fill="#fff" stroke="#2a2a2a" stroke-width="1.2"/><path d="M1 4.5H11.5V12M11.5 4.5L15 1" fill="none" stroke="#2a2a2a" stroke-width="1.2"/></svg><svg style="position:absolute;left:832px;top:775px" width="16" height="13" viewBox="0 0 16 13"><circle cx="6" cy="6" r="3" fill="#ffe14a" stroke="#d4a000"/><path d="M6 0.5v2M6 9.5v2M0.5 6h2M9.5 6h2M2 2l1.5 1.5M10 2l-1.5 1.5M2 10l1.5-1.5" stroke="#e0b000" stroke-width="1.2"/><path d="M9.5 7.5l4.5 4.5m0 -4.5l-4.5 4.5" stroke="#c8262c" stroke-width="2" stroke-linecap="round"/></svg><svg style="position:absolute;left:855px;top:776px" width="16" height="13" viewBox="0 0 16 13"><circle cx="6" cy="5" r="3.5" fill="none" stroke="#3f7f9a" stroke-width="1.4"/><path d="M1.5 11.5h7" stroke="#333" stroke-width="1.4"/><path d="M9.5 7.5l4.5 4.5m0 -4.5l-4.5 4.5" stroke="#c8262c" stroke-width="2" stroke-linecap="round"/></svg><svg style="position:absolute;left:873px;top:776px" width="16" height="13" viewBox="0 0 16 13"><path d="M1 6h3M4 2V10h7M4 4h7V10" fill="none" stroke="#2a66b0" stroke-width="1.6"/><path d="M1 8h2" stroke="#2a66b0" stroke-width="1.6"/><path d="M9.5 6.5l4.5 4.5m0 -4.5l-4.5 4.5" stroke="#c8262c" stroke-width="2" stroke-linecap="round"/></svg><svg style="position:absolute;left:893px;top:776px" width="16" height="13" viewBox="0 0 16 13"><path d="M1 6h3M4 2V10h7M4 4h7V10" fill="none" stroke="#2a66b0" stroke-width="1.6"/><path d="M1 8h2" stroke="#2a66b0" stroke-width="1.6"/><circle cx="13" cy="5" r="2.6" fill="#fff" stroke="#2a66b0" stroke-width="1.2"/><path d="M12 9h2" stroke="#2a66b0"/></svg><svg style="position:absolute;left:913px;top:776px" width="17" height="13" viewBox="0 0 17 13"><path d="M0.8 4.5Q2.5 8.5 5 8.5Q6.5 8 7.5 6.5" fill="none" stroke="#222" stroke-width="1.3"/><ellipse cx="9.5" cy="6.5" rx="2.6" ry="2.3" fill="none" stroke="#222" stroke-width="1.2"/><ellipse cx="14" cy="5.2" rx="2.4" ry="2.2" fill="none" stroke="#222" stroke-width="1.2"/></svg><svg style="position:absolute;left:937px;top:776px" width="9" height="13" viewBox="0 0 9 13"><circle cx="4.5" cy="4.5" r="3" fill="#fff" stroke="#3a88d0" stroke-width="1.3"/><path d="M3.5 8.5v2.5h2V8.5" fill="none" stroke="#3a88d0" stroke-width="1.1"/></svg><svg style="position:absolute;left:956px;top:776px" width="14" height="13" viewBox="0 0 14 13"><path d="M1 4L5 1H13V9L9 12H1Z" fill="#fff" stroke="#333" stroke-width="1"/><path d="M1 6.5h8M1 9h8M3.5 4V12M6 4V12M9 4V12M1 4h8l4-3" fill="none" stroke="#9a1a2a" stroke-width="1"/></svg>
<svg style="position:absolute;left:978px;top:778.5px" width="6" height="8" viewBox="0 0 6 8"><path d="M5 0.5L1 4L5 7.5Z" fill="#222"/></svg>
<div style="left:1173px;top:775px;width:15px;height:14px;border:1px solid #979797;border-radius:2px;background:linear-gradient(#fafafa,#ededed 45%,#d4d4d4)"></div>
<svg style="position:absolute;left:1375px;top:778.5px" width="6" height="8" viewBox="0 0 6 8"><path d="M1 0.5L5 4L1 7.5Z" fill="#222"/></svg>
<svg style="position:absolute;left:1392px;top:780px" width="10" height="10" viewBox="0 0 10 10"><g fill="#a8a8a8"><rect x="7" y="1" width="1.5" height="1.5"/><rect x="4" y="4" width="1.5" height="1.5"/><rect x="7" y="4" width="1.5" height="1.5"/><rect x="1" y="7" width="1.5" height="1.5"/><rect x="4" y="7" width="1.5" height="1.5"/><rect x="7" y="7" width="1.5" height="1.5"/></g></svg>
<svg style="position:absolute;left:717px;top:495px" width="15.5" height="15.5" viewBox="0 0 16 16">
<defs><linearGradient id="ig717495" x1="0" y1="0" x2="0" y2="1"><stop offset="0" stop-color="#f4e4f0"/><stop offset="0.5" stop-color="#d8c4d4"/><stop offset="0.52" stop-color="#ffffff"/><stop offset="1" stop-color="#ffffff"/></linearGradient></defs>
<path d="M0.5 0.5H11L15.5 5V15.5H0.5Z" fill="url(#ig717495)" stroke="#5d3f70"/>
<path d="M11 0.5L15.5 5H11Z" fill="#9a5a9a"/>
<text x="2.6" y="13.6" font-family="Liberation Sans" font-weight="bold" font-size="6.6" fill="#161616" letter-spacing="-0.3">RVT</text>
</svg>
<div style="position:absolute;left:735.8px;top:497.2px;font-size:12px;line-height:12px;letter-spacing:0px;color:#3a4756;white-space:nowrap;transform:scaleX(0.933);transform-origin:0 0">Floor Plan: Level 1 - Project2</div>
<div style="position:absolute;left:1309.8px;top:495.3px;width:29px;height:16px;border:1px solid #8c9db1;border-radius:3px;background:linear-gradient(#dce6f0,#d3dfeb 45%,#cad8e6 50%,#d3dfeb)"></div>
<div style="position:absolute;left:1318.8px;top:503.3px;width:11px;height:5px;border:1.5px solid #3a4450;border-radius:2px;background:#fff"></div>
<div style="position:absolute;left:1341.7px;top:495.3px;width:29px;height:16px;border:1px solid #8c9db1;border-radius:3px;background:linear-gradient(#dce6f0,#d3dfeb 45%,#cad8e6 50%,#d3dfeb)"></div>
<div style="position:absolute;left:1350.7px;top:498.3px;width:11px;height:9px;border:1.5px solid #3a4450;border-radius:1.5px;background:#fff"><div style="position:absolute;left:2px;top:2px;width:4px;height:2px;background:#3a4450"></div></div>
<div style="position:absolute;left:1373px;top:495.3px;width:29px;height:16px;border:1px solid #8c9db1;border-radius:3px;background:linear-gradient(#dce6f0,#d3dfeb 45%,#cad8e6 50%,#d3dfeb)"></div>
<svg style="position:absolute;left:1380.5px;top:496.3px" width="14" height="14" viewBox="0 0 14 14"><path d="M3.2 3.5L10.8 10.5M10.8 3.5L3.2 10.5" stroke="#3a4450" stroke-width="3.6" stroke-linecap="round"/><path d="M3.5 3.8L10.5 10.2M10.5 3.8L3.5 10.2" stroke="#fff" stroke-width="1.8" stroke-linecap="round"/></svg>
</body></html>
